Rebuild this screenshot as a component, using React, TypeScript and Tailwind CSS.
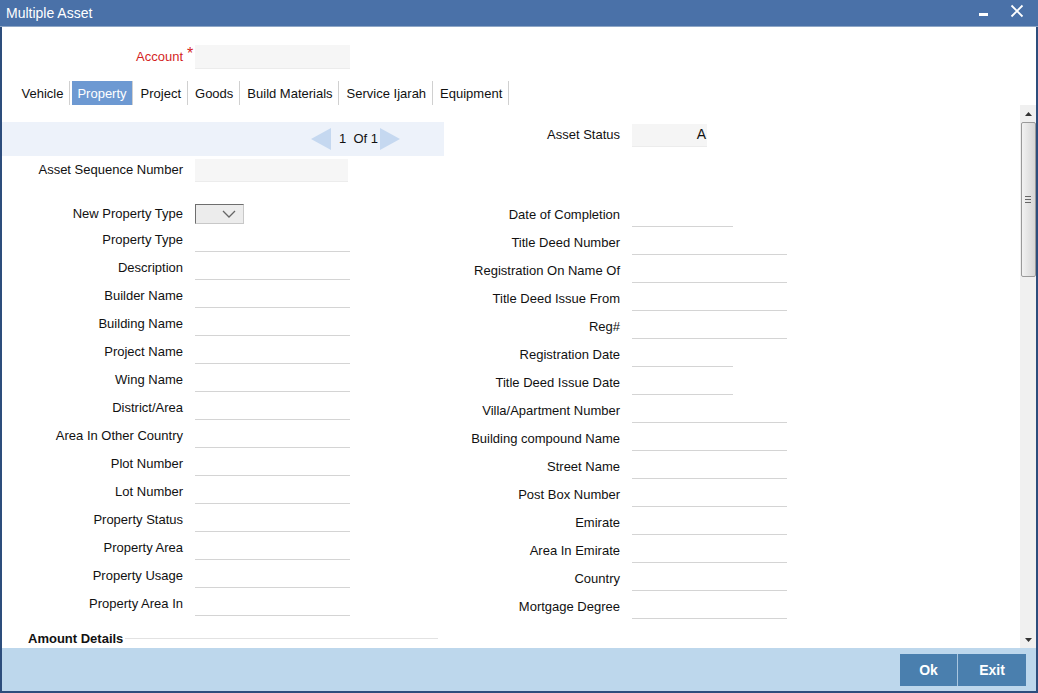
import React from "react";

const leftRows = [
  "Property Type",
  "Description",
  "Builder Name",
  "Building Name",
  "Project Name",
  "Wing Name",
  "District/Area",
  "Area In Other Country",
  "Plot Number",
  "Lot Number",
  "Property Status",
  "Property Area",
  "Property Usage",
  "Property Area In",
];

const rightRows: [string, boolean][] = [
  ["Date of Completion", true],
  ["Title Deed Number", false],
  ["Registration On Name Of", false],
  ["Title Deed Issue From", false],
  ["Reg#", false],
  ["Registration Date", true],
  ["Title Deed Issue Date", true],
  ["Villa/Apartment Number", false],
  ["Building compound Name", false],
  ["Street Name", false],
  ["Post Box Number", false],
  ["Emirate", false],
  ["Area In Emirate", false],
  ["Country", false],
  ["Mortgage Degree", false],
];

const tabs = ["Vehicle", "Property", "Project", "Goods", "Build Materials", "Service Ijarah", "Equipment"];

export default function App() {
  return (
    <div
      className="w-[1038px] h-[693px] flex flex-col bg-white text-[13px] text-[#111] overflow-hidden"
      style={{ fontFamily: '"Liberation Sans", Arial, sans-serif' }}
    >
      {/* Title bar */}
      <div className="h-[27px] shrink-0 bg-[#4a71a8] flex items-center justify-between border-b border-[#8fa7c6]">
        <span className="text-white text-[14px] pl-[6px]">Multiple Asset</span>
        <div className="flex items-center h-full">
          <div className="w-[9px] h-[3px] bg-white mr-[22px] mt-[3px]" />
          <svg width="14" height="14" viewBox="0 0 14 14" className="mr-[14px] mb-[5px]">
            <path d="M1.5 1.5 L12.5 12.5 M12.5 1.5 L1.5 12.5" stroke="white" strokeWidth="1.8" />
          </svg>
        </div>
      </div>

      <div className="flex-1 flex flex-col border-l-2 border-r-2 border-[#2d4d7c] min-h-0">
        {/* Account */}
        <div className="h-[54px] shrink-0 flex items-center pt-[6px]">
          <div className="w-[181px] text-right text-[13px] text-[#d41f1f]">Account</div>
          <span className="text-[#d41f1f] text-[16px] ml-[4px] -mt-[6px] w-[8px]">*</span>
          <div className="w-[155px] h-[24px] bg-[#f6f6f6] border-b border-[#ececec]" />
        </div>

        {/* Tabs */}
        <div className="h-[24px] shrink-0 flex pl-[14px] text-[13px]">
          {tabs.map((t) => (
            <div
              key={t}
              className={
                t === "Property"
                  ? "h-full flex items-center pt-px px-[5.5px] bg-[#6d99d2] text-white border-r border-[#d0d0d0] mr-[2px]"
                  : "h-full flex items-center pt-px px-[5.5px] border-r border-[#d0d0d0] mr-[2px]"
              }
            >
              {t}
            </div>
          ))}
        </div>

        {/* Scroll area */}
        <div className="flex-1 flex min-h-0">
          <div className="flex-1 flex overflow-hidden">
            {/* Left column */}
            <div className="w-[442px] shrink-0 flex flex-col">
              <div className="mt-[17px] h-[35px] bg-[#edf2fa] flex items-center pl-[309px]">
                <svg width="20" height="22" viewBox="0 0 20 22">
                  <path d="M0 11 L20 0 L20 22 Z" fill="#c5d8f0" />
                </svg>
                <span className="ml-[8px] text-[13px]">1&nbsp;&nbsp;Of 1</span>
                <svg width="20" height="22" viewBox="0 0 20 22" className="ml-[2px]">
                  <path d="M20 11 L0 0 L0 22 Z" fill="#c5d8f0" />
                </svg>
              </div>
              <div className="mt-[3px] h-[24px] flex items-center">
                <div className="w-[181px] text-right">Asset Sequence Number</div>
                <div className="ml-[12px] w-[153px] h-[23px] bg-[#f6f6f6] border-b border-[#ececec]" />
              </div>
              <div className="mt-[22px] h-[20px] flex items-center">
                <div className="w-[181px] text-right pt-px">New Property Type</div>
                <div className="ml-[12px] w-[49px] h-[20px] bg-[#ececec] border border-t-[#6e6e6e] border-l-[#6e6e6e] border-r-[#c8c8c8] border-b-[#c8c8c8] flex items-center justify-end pr-[7px]">
                  <svg width="14" height="8" viewBox="0 0 14 8">
                    <path d="M1 1 L7 7 L13 1" stroke="#666" strokeWidth="1.3" fill="none" />
                  </svg>
                </div>
              </div>
              <div className="mt-[2px] flex flex-col">
                {leftRows.map((r) => (
                  <div key={r} className="h-[28px] flex items-center">
                    <div className="w-[181px] text-right">{r}</div>
                    <div className="ml-[12px] w-[155px] h-[24px] border-b border-[#d4d4d4]" />
                  </div>
                ))}
              </div>
              <div className="mt-[11px] ml-[26px] w-[410px] flex items-center">
                <span className="font-bold text-[13px]">Amount Details</span>
                <div className="flex-1 h-px bg-[#e2e2e2] ml-[2px]" />
              </div>
            </div>

            {/* Right column */}
            <div className="flex-1 flex flex-col">
              <div className="mt-[18px] h-[24px] flex items-center">
                <div className="w-[176px] text-right">Asset Status</div>
                <div className="ml-[12px] w-[75px] h-[23px] bg-[#f5f5f5] border-b border-[#ececec] flex items-center justify-end pr-[1px] text-[14px]">
                  A
                </div>
              </div>
              <div className="mt-[54px] flex flex-col">
                {rightRows.map(([r, short]) => (
                  <div key={r} className="h-[28px] flex items-center">
                    <div className="w-[176px] text-right">{r}</div>
                    <div
                      className={
                        short
                          ? "ml-[12px] w-[101px] h-[24px] border-b border-[#d4d4d4]"
                          : "ml-[12px] w-[155px] h-[24px] border-b border-[#d4d4d4]"
                      }
                    />
                  </div>
                ))}
              </div>
            </div>
          </div>

          {/* Scrollbar */}
          <div className="w-[16px] shrink-0 bg-[#f0f0f0] flex flex-col items-center">
            <div className="h-[17px] w-full flex items-center justify-center">
              <svg width="7" height="4" viewBox="0 0 7 4">
                <path d="M0 4 L3.5 0 L7 4 Z" fill="#333" />
              </svg>
            </div>
            <div className="w-[15px] h-[155px] rounded-[2px] border border-[#9a9a9a] bg-gradient-to-r from-[#f2f2f2] to-[#d6d6d6] flex items-center justify-center">
              <div className="flex flex-col gap-[2px]">
                <div className="w-[6px] h-px bg-[#666]" />
                <div className="w-[6px] h-px bg-[#666]" />
                <div className="w-[6px] h-px bg-[#666]" />
              </div>
            </div>
            <div className="flex-1" />
            <div className="h-[17px] w-full flex items-center justify-center">
              <svg width="7" height="4" viewBox="0 0 7 4">
                <path d="M0 0 L3.5 4 L7 0 Z" fill="#333" />
              </svg>
            </div>
          </div>
        </div>

        {/* Footer */}
        <div className="h-[43px] shrink-0 bg-[#bdd7ec] flex items-start justify-end pt-[6px] pr-[10px]">
          <div className="w-[57px] h-[32px] bg-[#4a7fae] text-white font-bold text-[14px] flex items-center justify-center">
            Ok
          </div>
          <div className="w-px h-[32px] bg-[#a9c6e0]" />
          <div className="w-[68px] h-[32px] bg-[#4a7fae] text-white font-bold text-[14px] flex items-center justify-center">
            Exit
          </div>
        </div>
      </div>
      <div className="h-[2px] shrink-0 bg-[#2d4d7c]" />
    </div>
  );
}
